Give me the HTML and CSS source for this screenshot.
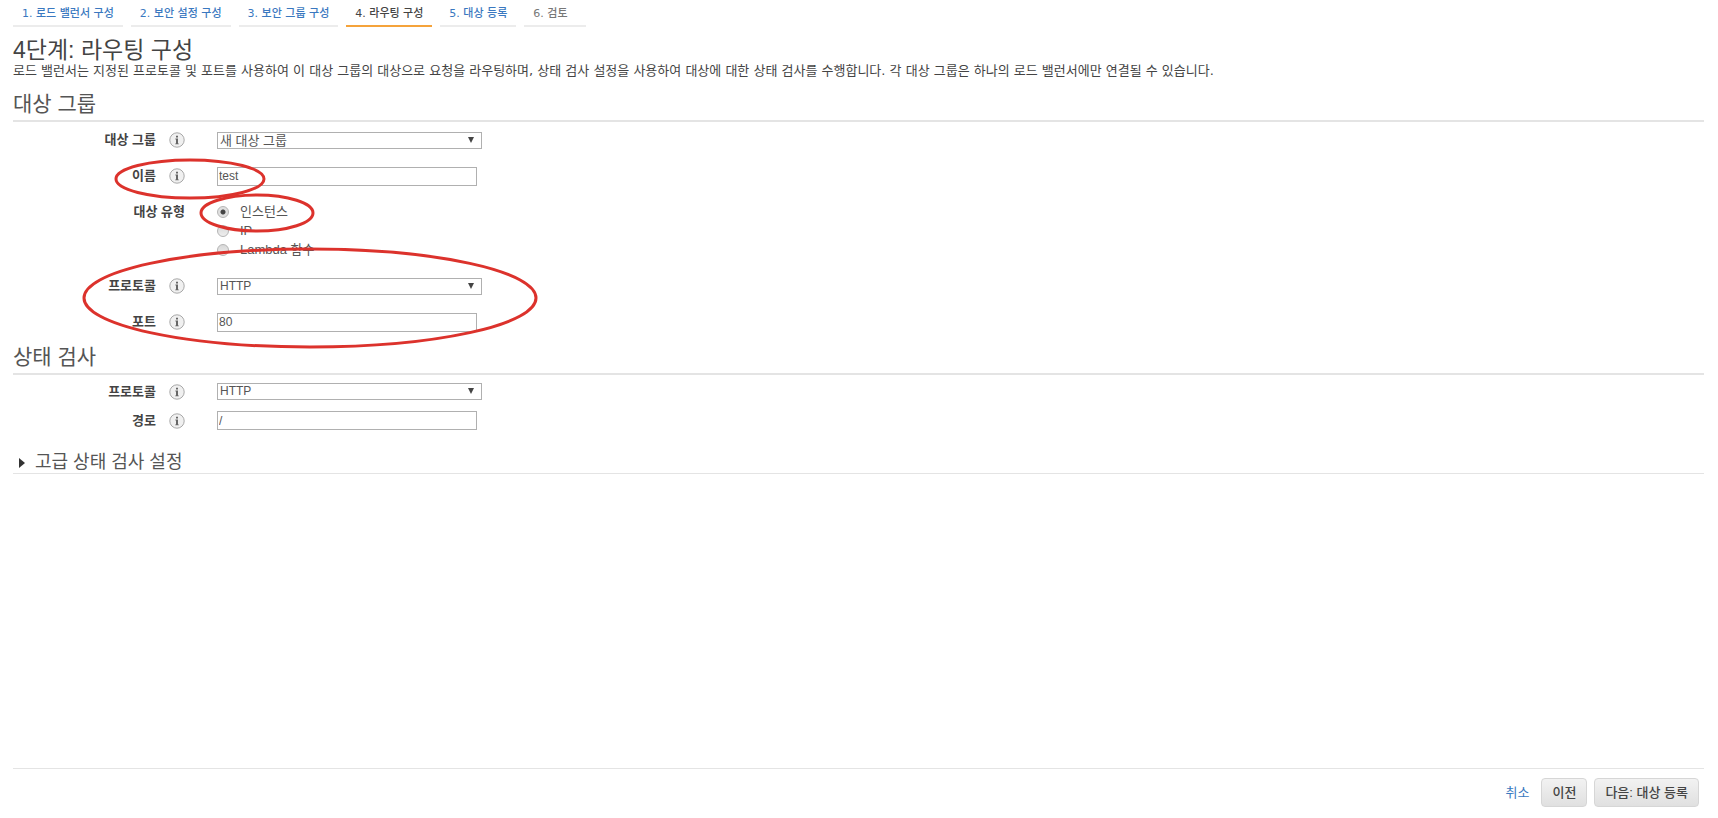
FILE: index.html
```html
<!doctype html>
<html lang="ko">
  <head>
    <meta charset="utf-8">
    <title>4단계: 라우팅 구성</title>
    <link rel="stylesheet" href="styles.css">
  </head>
  <body>
    <svg class="symbols" aria-hidden="true">
      <symbol id="info" viewBox="0 0 16 16">
        <circle cx="8" cy="8" r="7.2" fill="#f0f0f0" stroke="#a8a8a8" />
        <path d="M7 3.8h2v1.8H7zM6.4 6.6H9v4.8h.8v.8H6.2v-.8H7V7.4h-.6z" fill="#666" />
      </symbol>
    </svg>

    <nav class="steps">
      <a class="step" href="#step1">1. 로드 밸런서 구성</a>
      <a class="step" href="#step2">2. 보안 설정 구성</a>
      <a class="step" href="#step3">3. 보안 그룹 구성</a>
      <span class="step current">4. 라우팅 구성</span>
      <a class="step" href="#step5">5. 대상 등록</a>
      <span class="step last">6. 검토</span>
    </nav>

    <main>
      <h1>4단계: 라우팅 구성</h1>
      <p class="description">로드 밸런서는 지정된 프로토콜 및 포트를 사용하여 이 대상 그룹의 대상으로 요청을 라우팅하며, 상태 검사 설정을 사용하여 대상에 대한 상태 검사를 수행합니다. 각 대상 그룹은 하나의 로드 밸런서에만 연결될 수 있습니다.</p>

      <section class="target-group">
        <h2>대상 그룹</h2>
        <div class="row">
          <label for="group">대상 그룹</label>
          <svg class="info"><use href="#info" /></svg>
          <div class="select">
            <select id="group"><option>새 대상 그룹</option></select>
          </div>
        </div>
        <div class="row">
          <label for="name">이름</label>
          <svg class="info"><use href="#info" /></svg>
          <input type="text" id="name" value="test">
        </div>
        <div class="row radio-row" role="radiogroup" aria-labelledby="typeLabel">
          <span class="label" id="typeLabel">대상 유형</span>
          <div class="radios">
            <label><input type="radio" name="type" checked> <span>인스턴스</span></label>
            <label><input type="radio" name="type"> <span>IP</span></label>
            <label><input type="radio" name="type"> <span>Lambda 함수</span></label>
          </div>
        </div>
        <div class="row">
          <label for="protocol">프로토콜</label>
          <svg class="info"><use href="#info" /></svg>
          <div class="select">
            <select id="protocol"><option>HTTP</option></select>
          </div>
        </div>
        <div class="row">
          <label for="port">포트</label>
          <svg class="info"><use href="#info" /></svg>
          <input type="text" id="port" value="80">
        </div>
        <svg class="marks" viewBox="0 0 540 270" aria-hidden="true">
          <ellipse cx="190" cy="92" rx="74" ry="19" />
          <ellipse cx="257" cy="126" rx="56" ry="18" />
          <ellipse cx="310" cy="211" rx="226" ry="49" />
        </svg>
      </section>

      <section class="health-check">
        <h2>상태 검사</h2>
        <div class="row">
          <label for="checkProtocol">프로토콜</label>
          <svg class="info"><use href="#info" /></svg>
          <div class="select">
            <select id="checkProtocol"><option>HTTP</option></select>
          </div>
        </div>
        <div class="row">
          <label for="path">경로</label>
          <svg class="info"><use href="#info" /></svg>
          <input type="text" id="path" value="/">
        </div>
      </section>

      <details>
        <summary>
          <svg class="caret" viewBox="0 0 6 10"><path d="M0 0l6 5-6 5z" /></svg>
          고급 상태 검사 설정
        </summary>
      </details>
    </main>

    <footer>
      <a href="#cancel">취소</a>
      <button type="button">이전</button>
      <button type="button">다음: 대상 등록</button>
    </footer>
  </body>
</html>
```
FILE: styles.css
```css
:root {
  --text: #444444;
  --text-secondary: #555555;
  --link: #3a78c0;
  --border: #e4e4e4;
  --field-border: #b0b0b0;
  --accent: #f5a33b;
  --mark: #dc322c;
}

* {
  box-sizing: border-box;
}

body {
  display: flex;
  flex-direction: column;
  min-height: 100vh;
  margin: 0;
  padding: 0 14px 0 13px;
  background: #ffffff;
  color: var(--text);
  font-family: 'Liberation Sans', 'Noto Sans CJK KR', sans-serif;
  font-size: 13px;
  line-height: 16px;
}

a {
  color: var(--link);
  text-decoration: none;
}

.symbols {
  display: none;
}

/* wider word gaps for the small text */
.steps,
.description {
  font-family: 'DejaVu Sans', 'Noto Sans CJK KR', sans-serif;
}

.steps {
  display: flex;
  gap: 8px;
  margin-bottom: 10px;
}

.step {
  padding: 6px 9px 3px;
  border-bottom: 2px solid #ececec;
  font-size: 11px;
  font-weight: 500;
}

.step.current {
  border-color: var(--accent);
}

.step.last {
  min-width: 62px;
  color: #777777;
}

main {
  flex: 1;
}

h1 {
  margin: 0;
  font-size: 23px;
  font-weight: 400;
  line-height: 26px;
}

.description {
  margin: 0 0 8px;
}

h2 {
  margin: 0;
  padding-top: 1px;
  border-bottom: 2px solid var(--border);
  color: var(--text-secondary);
  font-size: 21px;
  font-weight: 400;
  line-height: 32px;
}

.target-group {
  position: relative;
}

.row {
  display: grid;
  grid-template-columns: 143px 16px 284px;
  column-gap: 13px;
  align-items: center;
  min-height: 36px;
}

.row > label,
.label {
  font-weight: 700;
  text-align: right;
}

.info {
  width: 16px;
  height: 16px;
}

.row > input,
.select,
.radios {
  margin-left: 19px;
}

input[type='text'],
select {
  border: 1px solid var(--field-border);
  border-radius: 0;
  background: #ffffff;
  color: var(--text-secondary);
  font: inherit;
  font-size: 12px;
}

input[type='text'] {
  width: 260px;
  height: 19px;
  padding: 0 1px;
}

.select {
  position: relative;
  height: 17px;
}

.select::after {
  content: '';
  position: absolute;
  top: 5px;
  right: 8px;
  border: 3px solid transparent;
  border-top: 6px solid #444444;
  border-bottom: 0;
  pointer-events: none;
}

select {
  display: block;
  width: 100%;
  height: 17px;
  padding: 0 2px;
  line-height: 15px;
  appearance: none;
}

#group {
  font-size: 13px;
}

.radio-row {
  grid-template-columns: 172px 284px;
  align-items: start;
  min-height: 74px;
  padding-top: 8px;
  line-height: 19px;
}

.radios label {
  display: flex;
  align-items: center;
  gap: 11px;
  color: var(--text-secondary);
}

input[type='radio'] {
  width: 12px;
  height: 12px;
  margin: 0;
  border: 1px solid #b5b5b5;
  border-radius: 50%;
  background: linear-gradient(#d8d8d8, #eeeeee);
  appearance: none;
}

input[type='radio']:checked {
  background: radial-gradient(circle, #444444 2px, #e0e0e0 3px);
}

/* hand-drawn circles around the fields to fill in */
.marks {
  position: absolute;
  top: 0;
  left: -13px;
  width: 540px;
  height: 270px;
  fill: none;
  stroke: var(--mark);
  stroke-width: 3px;
  pointer-events: none;
}

.health-check {
  padding-bottom: 15px;
}

.health-check h2 {
  margin-bottom: 2px;
}

.health-check .row {
  min-height: 29px;
}

summary {
  display: flex;
  align-items: center;
  gap: 10px;
  padding: 2px 0 0 6px;
  border-bottom: 1px solid var(--border);
  color: var(--text-secondary);
  font-size: 18px;
  line-height: 21px;
  cursor: pointer;
}

.caret {
  width: 6px;
  height: 10px;
  fill: #333333;
}

footer {
  display: flex;
  justify-content: flex-end;
  align-items: center;
  gap: 7px;
  height: 50px;
  padding: 0 5px 2px;
  border-top: 1px solid var(--border);
}

footer a {
  margin-right: 5px;
}

button {
  height: 29px;
  padding: 0 10px;
  border: 1px solid #d6d6d6;
  border-radius: 4px;
  background: linear-gradient(#f2f2f2, #e0e0e0);
  color: var(--text);
  font: inherit;
  font-weight: 500;
  cursor: pointer;
}
```
